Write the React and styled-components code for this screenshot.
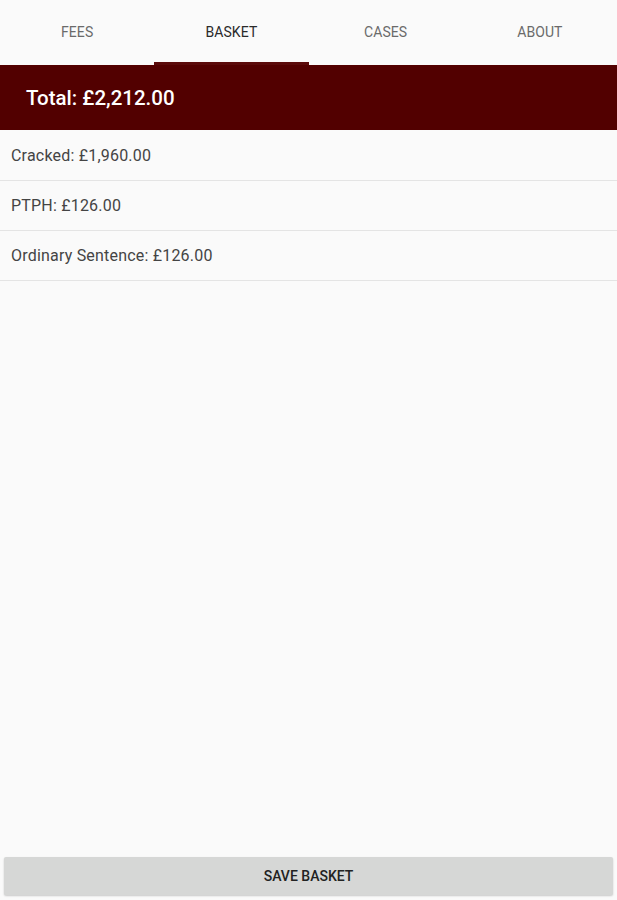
import styled, { createGlobalStyle } from 'styled-components'

const Global = createGlobalStyle`
html, body, #root {
  margin: 0;
  height: 100%;
}
body {
  background: #fafafa;
  font-family: Roboto, "Liberation Sans", sans-serif;
}
`

const Screen = styled.div`
display: flex;
flex-direction: column;
height: 100vh;
`

const Tabs = styled.nav`
display: grid;
grid-template-columns: repeat(4, 1fr);
height: 65px;
background: #fafafa;
`

const Tab = styled.div`
display: flex;
align-items: center;
justify-content: center;
padding-bottom: 2px;
font-size: 14px;
letter-spacing: 0.1px;
color: ${p => (p.$active ? '#2a2a2a' : '#6a6a6a')};
box-shadow: ${p => (p.$active ? 'inset 0 -3px 0 #5a0a0a' : 'none')};
`

const TotalBar = styled.div`
display: flex;
align-items: center;
height: 65px;
padding: 0 26px;
background: #520000;
color: #fff;
font-size: 20.5px;
font-weight: 500;
`

const List = styled.div`
flex: 1;
display: flex;
flex-direction: column;
padding-top: 1px;
`

const Row = styled.div`
display: flex;
align-items: center;
height: 49px;
padding: 0 11px;
border-bottom: 1px solid #e4e4e4;
font-size: 16px;
letter-spacing: 0.2px;
color: #444;
`

const SaveButton = styled.button`
margin: 0 4px 5px;
height: 38px;
border: none;
border-radius: 2px;
background: #d6d7d6;
box-shadow: 0 1px 2px rgba(0, 0, 0, 0.2);
font-family: inherit;
font-size: 14px;
font-weight: 500;
color: #222;
`

const tabs = ['Fees', 'Basket', 'Cases', 'About']
const items = [
  'Cracked: £1,960.00',
  'PTPH: £126.00',
  'Ordinary Sentence: £126.00',
]

export default function App() {
  return (
    <>
      <Global />
      <Screen>
        <Tabs>
          {tabs.map(t => (
            <Tab key={t} $active={t === 'Basket'}>{t.toUpperCase()}</Tab>
          ))}
        </Tabs>
        <TotalBar>Total: £2,212.00</TotalBar>
        <List>
          {items.map(i => <Row key={i}>{i}</Row>)}
        </List>
        <SaveButton>SAVE BASKET</SaveButton>
      </Screen>
    </>
  )
}
